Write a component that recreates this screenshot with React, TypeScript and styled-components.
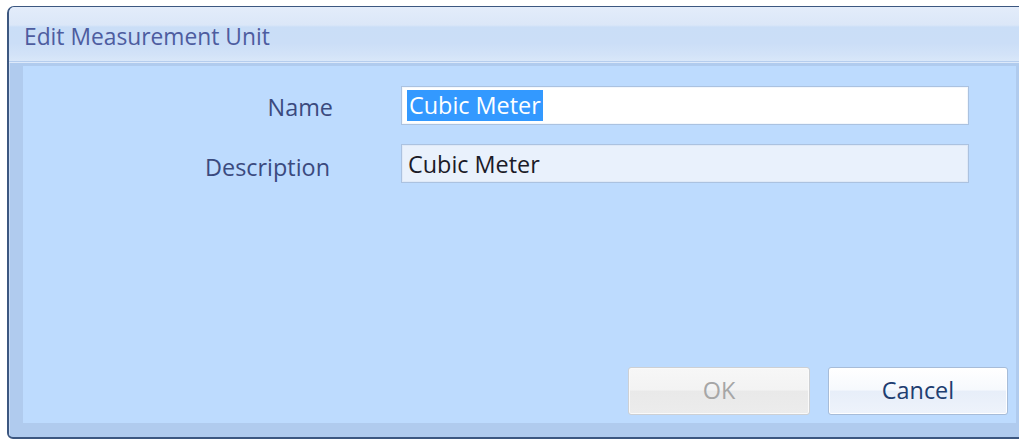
import React from 'react';
import styled, { createGlobalStyle } from 'styled-components';

const Global = createGlobalStyle`
  html, body {
    margin: 0;
    padding: 0;
    background: #ffffff;
    overflow: hidden;
  }
  body {
    font-family: "Open Sans", "Noto Sans", "DejaVu Sans", sans-serif;
  }
`;

const Page = styled.div`
  padding: 6px 0 0 7px;
  width: 1060px;
`;

const Window = styled.div`
  width: 1030px;
  height: 433px;
  box-sizing: border-box;
  border: 1px solid #3c5780;
  border-left-width: 2px;
  border-bottom-width: 2px;
  border-radius: 7px 7px 6px 6px;
  display: flex;
  flex-direction: column;
  overflow: hidden;
  background: #b0cbee;
`;

const TitleBar = styled.div`
  height: 55px;
  flex: none;
  display: flex;
  align-items: center;
  padding: 4px 0 0 15px;
  box-sizing: border-box;
  background: linear-gradient(
    to bottom,
    #e3ecfa 0px,
    #dbe7f8 18px,
    #cadef7 20px,
    #cbdef7 36px,
    #d3e3f8 48px,
    #dae8f9 55px
  );
  border-bottom: 1px solid #b5cdee;
  color: #4d5c9f;
  font-size: 22.8px;
`;

const Frame = styled.div`
  flex: 1;
  display: flex;
  border-top: 1px solid #dde9fa;
  padding: 3px 0 14px 14px;
  box-shadow: inset 1px 0 0 #c9dcf5;
`;

const Panel = styled.div`
  flex: none;
  display: flex;
  flex-direction: column;
  background: #bddbfe;
  padding: 20px 0 8px 0;
  box-sizing: border-box;
  width: 993px;
`;

const Form = styled.div`
  display: grid;
  grid-template-columns: 310px 568px;
  grid-auto-rows: 39px;
  column-gap: 68px;
  row-gap: 19px;
`;

const Label = styled.label<{ $shift?: number; $trim?: number }>`
  display: flex;
  align-items: center;
  justify-content: flex-end;
  padding-top: ${(p) => p.$shift ?? 2}px;
  padding-right: ${(p) => p.$trim ?? 0}px;
  color: #3b4a7e;
  font-size: 23.4px;
`;

const Field = styled.div<{ $readOnly?: boolean }>`
  box-sizing: border-box;
  border: 1px solid #abc2e0;
  box-shadow: inset 0 0 0 1px ${(p) => (p.$readOnly ? '#dfe9f7' : '#f3f7fc')};
  background: ${(p) => (p.$readOnly ? '#e9f1fc' : '#ffffff')};
  display: flex;
  align-items: center;
  padding-left: 5px;
  color: #1b1b28;
  font-size: 23.4px;
`;

const Selected = styled.span`
  display: inline-block;
  background: #3399ff;
  color: #ffffff;
  line-height: 31px;
  padding: 0 2px 0 2px;
`;

const Plain = styled.span`
  padding-left: 1px;
`;

const Buttons = styled.div`
  margin-top: auto;
  display: flex;
  justify-content: flex-end;
  gap: 18px;
  padding-right: 8px;
`;

const Button = styled.button<{ $width: number; $disabled?: boolean }>`
  width: ${(p) => p.$width}px;
  height: 48px;
  box-sizing: border-box;
  border-radius: 3px;
  font-family: inherit;
  font-size: 23.4px;
  padding: 0 0 2px 0;
  cursor: default;
  border: 1px solid ${(p) => (p.$disabled ? '#cdd0d4' : '#a7bcd8')};
  box-shadow: inset 0 0 0 1px ${(p) => (p.$disabled ? '#fafafa' : '#ffffff')};
  color: ${(p) => (p.$disabled ? '#a6a6a6' : '#203d70')};
  background: ${(p) =>
    p.$disabled
      ? 'linear-gradient(to bottom, #f7f7f7 0%, #f3f3f3 48%, #e9e9e9 50%, #ececec 100%)'
      : 'linear-gradient(to bottom, #ffffff 0%, #f6f9fd 48%, #e7eef9 50%, #eef3fb 100%)'};
`;

export default function App() {
  return (
    <>
      <Global />
      <Page>
        <Window>
          <TitleBar>Edit Measurement Unit</TitleBar>
          <Frame>
            <Panel>
              <Form>
                <Label>Name</Label>
                <Field>
                  <Selected>Cubic Meter</Selected>
                </Field>
                <Label $shift={6} $trim={3}>
                  Description
                </Label>
                <Field $readOnly>
                  <Plain>Cubic Meter</Plain>
                </Field>
              </Form>
              <Buttons>
                <Button $width={182} $disabled disabled>
                  OK
                </Button>
                <Button $width={180}>Cancel</Button>
              </Buttons>
            </Panel>
          </Frame>
        </Window>
      </Page>
    </>
  );
}
